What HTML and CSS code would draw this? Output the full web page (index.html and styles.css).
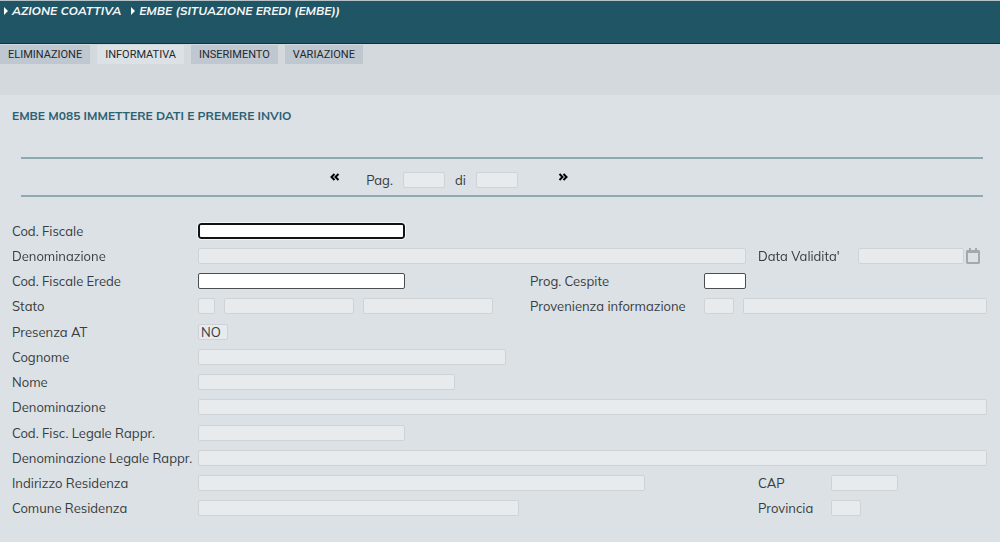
FILE: index.html
```html
<!DOCTYPE html>
<html lang="it">
<head>
<meta charset="utf-8">
<meta name="viewport" content="width=device-width, initial-scale=1">
<title>EMBE - Situazione eredi</title>
<link rel="stylesheet" href="styles.css">
</head>
<body>
<header class="topbar">
  <nav class="crumbs" aria-label="Percorso">
    <a class="crumb" href="#">AZIONE COATTIVA</a>
    <a class="crumb" href="#">EMBE (SITUAZIONE EREDI (EMBE))</a>
  </nav>
</header>
<nav class="tabs" aria-label="Funzioni">
  <button class="tab" type="button">ELIMINAZIONE</button>
  <button class="tab tab-current" type="button" aria-current="page">INFORMATIVA</button>
  <button class="tab" type="button">INSERIMENTO</button>
  <button class="tab" type="button">VARIAZIONE</button>
</nav>
<main class="content">
  <h1 class="message">EMBE M085 IMMETTERE DATI E PREMERE INVIO</h1>
  <form class="form">
    <div class="pager">
      <button class="pager-button" type="button" aria-label="Pagina precedente">
        <svg class="chevrons" viewBox="0 0 10 8"><path d="M4.5 1 1.5 4l3 3M8.5 1l-3 3 3 3"/></svg>
      </button>
      <div class="pager-pages">
        <label for="pag">Pag.</label>
        <input class="field w-page" id="pag" type="text" disabled>
        <label for="pagTot">di</label>
        <input class="field w-page" id="pagTot" type="text" disabled>
      </div>
      <button class="pager-button" type="button" aria-label="Pagina successiva">
        <svg class="chevrons" viewBox="0 0 10 8"><path d="m1.5 1 3 3-3 3M5.5 1l3 3-3 3"/></svg>
      </button>
    </div>

    <div class="group">
      <label class="label" for="codFiscale">Cod. Fiscale</label>
      <input class="field w-code" id="codFiscale" type="text" autofocus>

      <label class="label" for="denominazione">Denominazione</label>
      <input class="field to-third with-gap" id="denominazione" type="text" disabled>
      <label class="label third" for="dataValidita">Data Validita'</label>
      <div class="date">
        <input class="field w-date" id="dataValidita" type="text" disabled>
        <button class="date-button" type="button" aria-label="Calendario" disabled>
          <svg class="calendar" viewBox="0 0 14 16"><path fill-rule="evenodd" d="M3 0h2v2h4V0h2v2h2l1 1v12l-1 1H1l-1-1V3l1-1h2zM2 5v9h10V5z"/></svg>
        </button>
      </div>

      <label class="label" for="codErede">Cod. Fiscale Erede</label>
      <input class="field w-code" id="codErede" type="text">
      <label class="label second" for="progCespite">Prog. Cespite</label>
      <input class="field w-page second-field" id="progCespite" type="text">

      <label class="label" for="stato">Stato</label>
      <div class="fields">
        <input class="field w-flag" id="stato" type="text" disabled>
        <input class="field w-state" type="text" aria-label="Descrizione stato" disabled>
        <input class="field w-state" type="text" aria-label="Dettaglio stato" disabled>
      </div>
      <label class="label second" for="provenienza">Provenienza informazione</label>
      <div class="fields second-fields">
        <input class="field w-short" id="provenienza" type="text" disabled>
        <input class="field grow" type="text" aria-label="Descrizione provenienza" disabled>
      </div>
    </div>

    <div class="group">
      <label class="label" for="presenzaAt">Presenza AT</label>
      <input class="field w-short" id="presenzaAt" type="text" value="NO" disabled>
      <label class="label" for="cognome">Cognome</label>
      <input class="field w-surname" id="cognome" type="text" disabled>
      <label class="label" for="nome">Nome</label>
      <input class="field w-name" id="nome" type="text" disabled>
      <label class="label" for="denominazione2">Denominazione</label>
      <input class="field to-end" id="denominazione2" type="text" disabled>
    </div>

    <div class="group">
      <label class="label" for="codLegale">Cod. Fisc. Legale Rappr.</label>
      <input class="field w-code" id="codLegale" type="text" disabled>
      <label class="label" for="denLegale">Denominazione Legale Rappr.</label>
      <input class="field to-end" id="denLegale" type="text" disabled>
      <label class="label" for="indirizzo">Indirizzo Residenza</label>
      <input class="field w-address to-third" id="indirizzo" type="text" disabled>
      <label class="label third" for="cap">CAP</label>
      <input class="field w-zip third-field" id="cap" type="text" disabled>
      <label class="label" for="comune">Comune Residenza</label>
      <input class="field w-town to-third" id="comune" type="text" disabled>
      <label class="label third" for="provincia">Provincia</label>
      <input class="field w-short third-field" id="provincia" type="text" disabled>
    </div>
  </form>
</main>
</body>
</html>
```
FILE: styles.css
```css
* { box-sizing: border-box; }

body {
  margin: 0;
  background: #dce1e5;
  color: #373c40;
  font: 13px/16px Muli, Mulish, "Open Sans", sans-serif;
}

button {
  margin: 0;
  padding: 0;
  border: 0;
  background: none;
  font: inherit;
  color: inherit;
}

.topbar {
  height: 44px;
  padding: 2px 4px;
  background: #205566;
  border-top: 1px solid #b5c3c8;
  border-bottom: 1px solid #14303b;
}

.crumbs { display: flex; gap: 10px; }

.crumb {
  display: flex;
  align-items: center;
  gap: 4px;
  color: #f4f7f8;
  font-size: 12px;
  font-style: italic;
  font-weight: 700;
  text-decoration: none;
}

.crumb::before {
  content: "";
  border: 4px solid transparent;
  border-left-color: #fff;
  border-right: 0;
}

.tabs {
  display: flex;
  align-items: flex-start;
  gap: 7px;
  height: 51px;
  padding-top: 1px;
  background: #d4d9dd;
}

.tab {
  height: 19px;
  padding: 0 8px;
  background: #bfc8d0;
  color: #25292c;
  font: 11px/19px Roboto, "Liberation Sans", sans-serif;
}

.tab-current { background: #dce1e5; }

.content { padding: 12px 13px 15px 12px; }

.message {
  margin: 0;
  color: #2b6072;
  font-size: 12px;
  font-weight: 700;
  line-height: 18px;
}

.pager {
  display: flex;
  justify-content: center;
  align-items: center;
  gap: 26px;
  height: 40px;
  margin: 32px 4px 26px 9px;
  padding-right: 106px;
  border-top: 2px solid #8fa9b3;
  border-bottom: 2px solid #8fa9b3;
}

.pager-pages {
  display: flex;
  align-items: center;
  gap: 10px;
  padding: 6px 14px 0 0;
}

.pager-button { height: 12px; }

.chevrons {
  display: block;
  width: 10px;
  height: 8px;
  fill: none;
  stroke: #000;
  stroke-width: 2;
}

.group {
  display: grid;
  grid-template-columns: 186px 332fr 174px 54px 73px 156fr;
  grid-auto-rows: 16px;
  row-gap: 9px;
}

.group + .group { margin-top: 10px; }

.label { grid-column: 1; white-space: nowrap; }
.second { grid-column: 3; }
.third { grid-column: 5; }

.field {
  grid-column: 2;
  height: 16px;
  min-width: 0;
  padding: 0 2px;
  border: 1px solid #4b4e50;
  border-radius: 2px;
  background: #fff;
  color: #373c40;
  font: inherit;
  line-height: 14px;
}

.field:disabled { border-color: #cfd3d5; background: #e7ebee; }

.field:focus {
  border: 2px solid #101214;
  border-radius: 3px;
  outline: 1px solid #f3f5f6;
  caret-color: #777;
}

.to-third { grid-column: 2 / span 3; }
.with-gap { margin-right: 12px; }
.to-end { grid-column: 2 / -1; }
.second-field { grid-column: 4; }
.third-field { grid-column: 6; }

.fields { display: flex; gap: 9px; grid-column: 2; }
.second-fields { grid-column: 4 / -1; }
.grow { flex: 1; }

.date {
  display: flex;
  justify-content: flex-end;
  gap: 2px;
  grid-column: 6;
  padding-right: 7px;
}

.calendar {
  display: block;
  width: 14px;
  height: 16px;
  fill: #a3a9ac;
}

.w-flag { width: 17px; }
.w-short { width: 30px; }
.w-page { width: 42px; }
.w-zip { width: 67px; }
.w-date { width: 106px; }
.w-state { width: 130px; }
.w-code { width: 207px; }
.w-name { width: 257px; }
.w-surname { width: 308px; }
.w-town { width: 321px; }
.w-address { width: 447px; }
```
